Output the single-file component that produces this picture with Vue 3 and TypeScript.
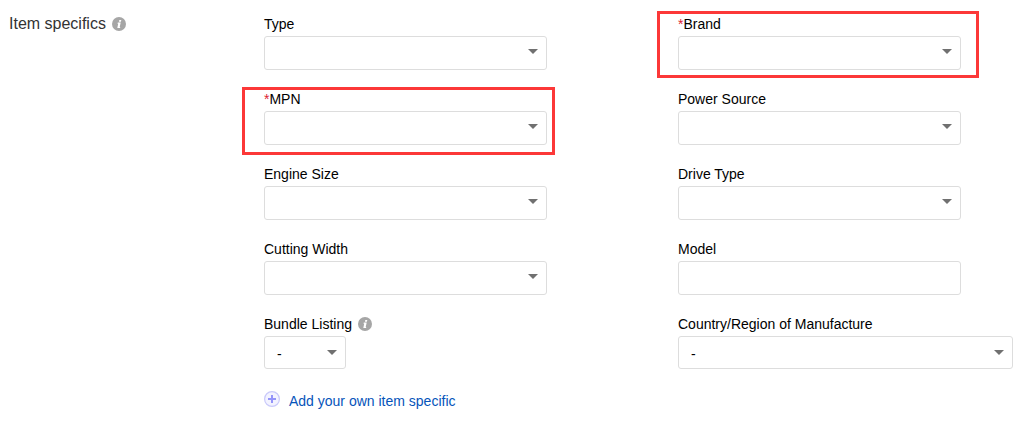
<script setup lang="ts">
import { reactive } from 'vue'

interface Field {
  id: string
  label: string
  kind: 'combo' | 'text' | 'select'
  required?: boolean
  info?: boolean
  classes?: string[]
}

const fields: Field[] = [
  { id: 'type', label: 'Type', kind: 'combo' },
  { id: 'brand', label: 'Brand', kind: 'combo', required: true, classes: ['marked', 'marked-brand'] },
  { id: 'mpn', label: 'MPN', kind: 'combo', required: true, classes: ['marked', 'marked-mpn'] },
  { id: 'power', label: 'Power Source', kind: 'combo' },
  { id: 'engine', label: 'Engine Size', kind: 'combo' },
  { id: 'drive', label: 'Drive Type', kind: 'combo' },
  { id: 'cutting', label: 'Cutting Width', kind: 'combo' },
  { id: 'model', label: 'Model', kind: 'text' },
  { id: 'bundle', label: 'Bundle Listing', kind: 'select', info: true, classes: ['short'] },
  { id: 'country', label: 'Country/Region of Manufacture', kind: 'select', classes: ['wide'] },
]

const values = reactive<Record<string, string>>(
  Object.fromEntries(fields.map((f) => [f.id, f.kind === 'select' ? '-' : ''])),
)
</script>

<template>
  <section class="specifics">
    <h2 class="title">
      Item specifics
      <svg class="info" viewBox="0 0 14 14" aria-hidden="true">
        <circle cx="7" cy="7" r="7" fill="#a6a6a6" />
        <path d="M7.3 2.9h2l-.4 1.8h-2zM5.8 5.5h2.9L7.7 9.9h.6l-.3 1.2H5.3l.9-4.4h-.7z" fill="#fff" />
      </svg>
    </h2>
    <form class="fields" @submit.prevent>
      <div v-for="f in fields" :key="f.id" class="field" :class="f.classes">
        <div class="caption">
          <label :for="f.id"><span v-if="f.required" class="star">*</span>{{ f.label }}</label>
          <svg v-if="f.info" class="info" viewBox="0 0 14 14" aria-hidden="true">
            <circle cx="7" cy="7" r="7" fill="#a6a6a6" />
            <path d="M7.3 2.9h2l-.4 1.8h-2zM5.8 5.5h2.9L7.7 9.9h.6l-.3 1.2H5.3l.9-4.4h-.7z" fill="#fff" />
          </svg>
        </div>
        <input v-if="f.kind === 'text'" :id="f.id" v-model="values[f.id]" class="control" type="text" />
        <div v-else class="picker" :class="f.kind">
          <select :id="f.id" v-model="values[f.id]" class="control">
            <option v-if="f.kind === 'select'" value="-">-</option>
            <option v-else value=""></option>
          </select>
          <svg class="arrow" viewBox="0 0 10 5" aria-hidden="true">
            <path d="M0 0h10L5 5z" fill="#707070" />
          </svg>
        </div>
      </div>
      <a class="add" href="#">
        <svg class="plus" viewBox="0 0 16 16" aria-hidden="true">
          <circle cx="8" cy="8" r="7.4" fill="#f3f3ff" stroke="#c9c9fa" stroke-width="1.2" />
          <path d="M8 4v8M4 8h8" stroke="#9494fa" stroke-width="2" />
        </svg>
        <span>Add your own item specific</span>
      </a>
    </form>
  </section>
</template>

<style>
body {
  margin: 0;
  background: #fff;
}
</style>

<style scoped>
.specifics {
  display: grid;
  grid-template-columns: 255px minmax(0, 1fr);
  padding: 14px 16px 16px 9px;
  font-family: "Liberation Sans", Arial, sans-serif;
  font-size: 14px;
  color: #000;
}
.title {
  display: flex;
  align-items: center;
  align-self: start;
  gap: 6px;
  margin: 0;
  font-size: 16px;
  font-weight: 400;
  line-height: 20px;
  color: #333;
}
.info {
  width: 14px;
  height: 14px;
  flex: none;
}
.fields {
  display: grid;
  grid-template-columns: minmax(0, 1fr) 335px;
  row-gap: 19px;
}
.field {
  position: relative;
  max-width: 283px;
}
.short {
  max-width: 130px;
}
.short .picker {
  width: 82px;
}
.wide {
  max-width: none;
}
.caption {
  display: flex;
  align-items: center;
  gap: 6px;
  height: 20px;
  margin-bottom: 2px;
  line-height: 20px;
  white-space: nowrap;
}
.star {
  color: #dd1e31;
}
.picker {
  position: relative;
}
.control {
  display: block;
  box-sizing: border-box;
  width: 100%;
  height: 34px;
  margin: 0;
  padding: 2px 24px 0 12px;
  border: 1px solid #ddd;
  border-radius: 3px;
  background: #fff;
  color: #000;
  font: inherit;
  appearance: none;
}
.select .control {
  height: 33px;
}
.arrow {
  position: absolute;
  top: 13px;
  right: 9px;
  width: 10px;
  height: 5px;
  pointer-events: none;
}
.select .arrow {
  top: 14px;
}
.marked::after {
  content: "";
  position: absolute;
  border: 3px solid #fc3838;
  pointer-events: none;
}
.marked-brand::after {
  inset: -3px -18px -8px -21px;
}
.marked-mpn::after {
  inset: -2px -8px -10px -22px;
}
.add {
  display: flex;
  align-items: flex-start;
  justify-self: start;
  gap: 9px;
  line-height: 26px;
  color: #0654ba;
  text-decoration: none;
}
.plus {
  width: 16px;
  height: 16px;
  margin-top: 3px;
  flex: none;
}
</style>
